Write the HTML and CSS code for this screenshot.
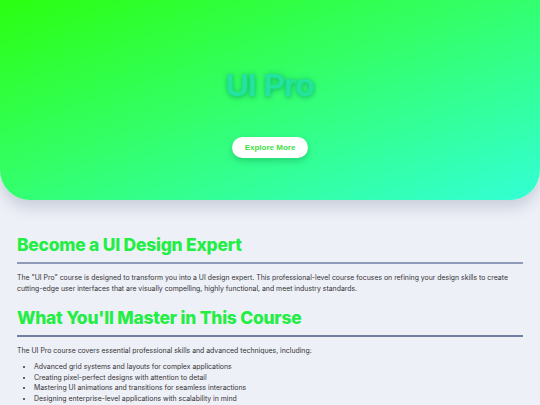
FILE: index.html
```html
<!DOCTYPE html>
<html lang="en">
<head>
<meta charset="utf-8">
<title>UI Pro</title>
<link rel="stylesheet" href="styles.css">
</head>
<body>
<header class="hero">
  <h1 class="hero-title">UI Pro</h1>
  <a class="hero-btn" href="#">Explore More</a>
</header>
<main class="content">
  <section class="block">
    <h2 class="block-title">Become a UI Design Expert</h2>
    <p class="text">The "UI Pro" course is designed to transform you into a UI design expert. This professional-level course focuses on refining your design skills to create cutting-edge user interfaces that are visually compelling, highly functional, and meet industry standards.</p>
  </section>
  <section class="block block-second">
    <h2 class="block-title block-title-alt">What You'll Master in This Course</h2>
    <p class="text text-alt">The UI Pro course covers essential professional skills and advanced techniques, including:</p>
    <ul class="list">
      <li>Advanced grid systems and layouts for complex applications</li>
      <li>Creating pixel-perfect designs with attention to detail</li>
      <li>Mastering UI animations and transitions for seamless interactions</li>
      <li>Designing enterprise-level applications with scalability in mind</li>
    </ul>
  </section>
</main>
</body>
</html>
```
FILE: styles.css
```css
html, body {
  margin: 0;
  padding: 0;
}
body {
  background: #eef0f8;
  font-family: "Inter", "DejaVu Sans", sans-serif;
  color: #333;
  overflow: hidden;
}
.hero {
  height: 200px;
  box-sizing: border-box;
  border-radius: 0 0 30px 30px;
  background: linear-gradient(160deg, #2bff10 0%, #33ff66 45%, #33ffd6 100%);
  box-shadow: 0 8px 14px rgba(40, 60, 90, 0.18);
  display: flex;
  flex-direction: column;
  align-items: center;
  padding-top: 66px;
}
.hero-title {
  margin: 0;
  font-family: "Liberation Sans", Arial, sans-serif;
  font-weight: 700;
  font-size: 32px;
  line-height: 38px;
  letter-spacing: -1px;
  color: #22e3a0;
  text-shadow: 0 0 6px rgba(0, 150, 120, 0.45), 0 2px 4px rgba(0, 120, 90, 0.3);
}
.hero-btn {
  margin-top: 33px;
  width: 76px;
  height: 21px;
  box-sizing: border-box;
  display: flex;
  align-items: center;
  justify-content: center;
  background: #fff;
  border-radius: 11px;
  font-family: "Liberation Sans", Arial, sans-serif;
  font-weight: 700;
  font-size: 8px;
  color: #3fe046;
  text-decoration: none;
  box-shadow: 0 3px 6px rgba(0, 80, 40, 0.25);
}
.content {
  padding: 33px 17px 0;
}
.block-title {
  margin: 0;
  padding-bottom: 6px;
  border-bottom: 2px solid #8e9ab8;
  font-family: "Inter", sans-serif;
  font-weight: 800;
  font-size: 17.4px;
  line-height: 23px;
  letter-spacing: -0.2px;
  color: #22ee44;
}
.block-title-alt {
  padding-bottom: 6px;
  border-bottom-color: #6f80a2;
}
.block-second {
  margin-top: 12px;
}
.text {
  margin: 8px 0 0;
  font-size: 6.9px;
  line-height: 11px;
  color: #333;
}
.text-alt {
  margin-top: 8px;
}
.list {
  margin: 6px 0 0;
  padding-left: 17px;
  font-size: 6.9px;
  line-height: 10.7px;
  color: #333;
}
```
